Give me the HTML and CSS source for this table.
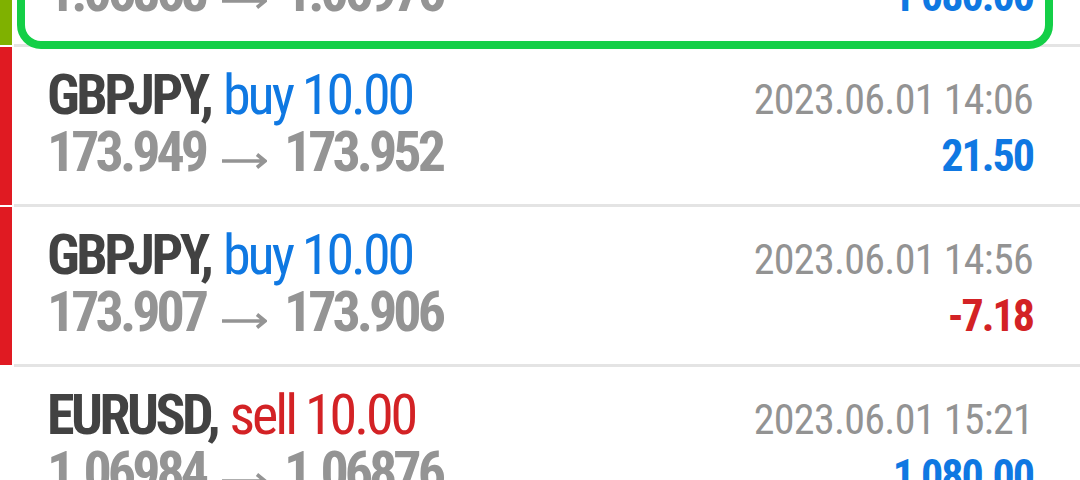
FILE: index.html
```html
<!DOCTYPE html>
<html lang="en">
<head>
    <meta charset="UTF-8">
    <meta name="viewport" content="width=device-width, initial-scale=1.0">
    <title>History</title>
    <link rel="stylesheet" href="styles.css">
</head>
<body>
    <div class="history">
        <div class="deal">
            <div class="strip profit"></div>
            <div class="deal-body">
                <div class="line">
                    <div class="name">EURUSD, <span class="buy">buy 10.00</span></div>
                    <div class="time">2023.06.01 13:42</div>
                </div>
                <div class="line">
                    <div class="prices">1.06868 <svg class="arrow" width="46" height="16" viewBox="0 0 46 16"><path d="M1 8H44M36 1.5L44 8L36 14.5" fill="none" stroke="currentColor" stroke-width="3.6"/></svg> 1.06976</div>
                    <div class="amount plus">1 080.00</div>
                </div>
            </div>
            <div class="highlight"></div>
        </div>

        <div class="deal">
            <div class="strip loss"></div>
            <div class="deal-body">
                <div class="line">
                    <div class="name">GBPJPY, <span class="buy">buy 10.00</span></div>
                    <div class="time">2023.06.01 14:06</div>
                </div>
                <div class="line">
                    <div class="prices">173.949 <svg class="arrow" width="46" height="16" viewBox="0 0 46 16"><path d="M1 8H44M36 1.5L44 8L36 14.5" fill="none" stroke="currentColor" stroke-width="3.6"/></svg> 173.952</div>
                    <div class="amount plus">21.50</div>
                </div>
            </div>
        </div>

        <div class="deal">
            <div class="strip loss"></div>
            <div class="deal-body">
                <div class="line">
                    <div class="name">GBPJPY, <span class="buy">buy 10.00</span></div>
                    <div class="time">2023.06.01 14:56</div>
                </div>
                <div class="line">
                    <div class="prices">173.907 <svg class="arrow" width="46" height="16" viewBox="0 0 46 16"><path d="M1 8H44M36 1.5L44 8L36 14.5" fill="none" stroke="currentColor" stroke-width="3.6"/></svg> 173.906</div>
                    <div class="amount minus">-7.18</div>
                </div>
            </div>
        </div>

        <div class="deal">
            <div class="strip"></div>
            <div class="deal-body">
                <div class="line">
                    <div class="name">EURUSD, <span class="sell">sell 10.00</span></div>
                    <div class="time">2023.06.01 15:21</div>
                </div>
                <div class="line">
                    <div class="prices">1.06984 <svg class="arrow" width="46" height="16" viewBox="0 0 46 16"><path d="M1 8H44M36 1.5L44 8L36 14.5" fill="none" stroke="currentColor" stroke-width="3.6"/></svg> 1.06876</div>
                    <div class="amount plus">1 080.00</div>
                </div>
            </div>
        </div>
    </div>
</body>
</html>
```
FILE: styles.css
```css
body {
    margin: 0;
    background: #fff;
    font-family: "Roboto Condensed", Roboto, sans-serif;
    font-stretch: 75%;
    overflow: hidden;
}
.history {
    margin-top: -113px;
}
.deal {
    position: relative;
    display: flex;
}
.strip {
    width: 12px;
    flex-shrink: 0;
    margin-bottom: 2px;
}
.strip.profit {
    background: #7fb100;
}
.strip.loss {
    background: #e01a22;
}
.deal-body {
    flex: 1;
    margin-left: 2px;
    padding: 20px 47px 23px 33px;
    border-bottom: 3px solid #e4e4e4;
}
.line {
    display: flex;
    justify-content: space-between;
    align-items: baseline;
    line-height: 57px;
}
.name {
    font-size: 56px;
    font-weight: bold;
    color: #424242;
    letter-spacing: -3.5px;
}
.buy, .sell {
    font-weight: normal;
    letter-spacing: -3px;
    margin-left: 3px;
}
.buy {
    color: #0f78e2;
}
.sell {
    color: #d32225;
}
.prices {
    font-size: 56px;
    font-weight: bold;
    color: #949494;
    letter-spacing: -4px;
}
.arrow {
    color: #949494;
    margin: 0 8px 0 7px;
    vertical-align: 2px;
}
.time {
    font-size: 42px;
    line-height: 1;
    color: #939393;
    letter-spacing: -0.7px;
}
.amount {
    font-size: 44px;
    font-weight: bold;
    line-height: 1;
    letter-spacing: -2px;
}
.amount.plus {
    color: #0f78e2;
}
.amount.minus {
    color: #d32225;
}
.highlight {
    position: absolute;
    left: 17px;
    right: 27px;
    top: 40px;
    bottom: -2px;
    border: 8px solid #14cf47;
    border-radius: 24px;
}
```
